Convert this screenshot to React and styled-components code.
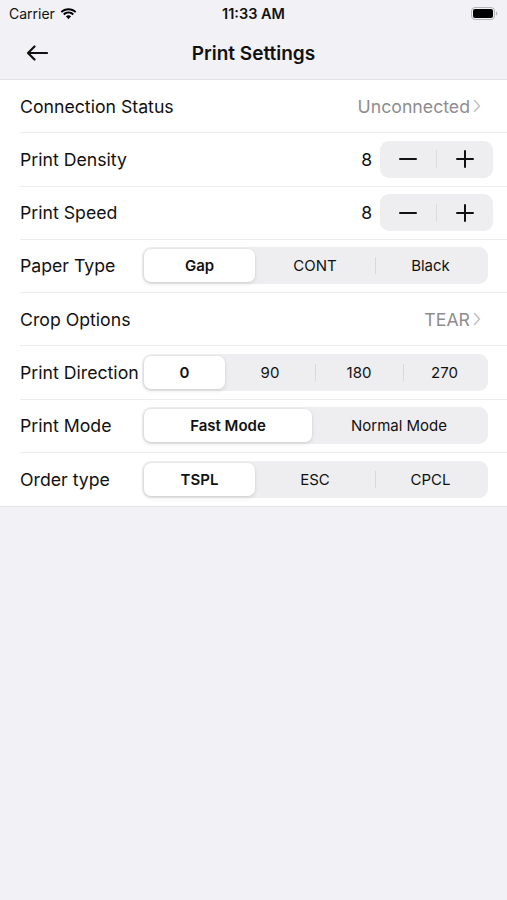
import React from "react";
import styled, { createGlobalStyle } from "styled-components";

const GlobalStyle = createGlobalStyle`
  body {
    margin: 0;
    background: #f1f1f6;
    font-family: Inter, "Liberation Sans", sans-serif;
    color: #111;
  }
`;

const Screen = styled.div`
  width: 507px;
  height: 900px;
  background: #f1f1f6;
`;

const StatusBar = styled.div`
  height: 27px;
  display: grid;
  grid-template-columns: 1fr auto 1fr;
  align-items: center;
  padding: 0 9px;
  font-size: 14px;
  .left {
    display: flex;
    align-items: center;
    gap: 5px;
  }
  .time {
    font-weight: 600;
    font-size: 14.5px;
  }
  .right {
    display: flex;
    justify-content: flex-end;
  }
`;

const NavBar = styled.div`
  height: 52px;
  display: grid;
  grid-template-columns: 60px 1fr 60px;
  align-items: center;
  border-bottom: 1px solid #e2e2e6;
  h1 {
    margin: 0;
    text-align: center;
    font-size: 19px;
    font-weight: 600;
  }
  button {
    border: none;
    background: none;
    padding: 0 0 0 26px;
    display: flex;
    align-items: center;
  }
`;

const List = styled.div`
  background: #fff;
  border-bottom: 1px solid #e4e4e8;
`;

const Row = styled.div`
  height: 53.25px;
  box-sizing: border-box;
  margin-left: 20px;
  padding-right: 19px;
  display: flex;
  align-items: center;
  justify-content: space-between;
  border-bottom: ${(p) => (p.$last ? "none" : "1px solid #ececef")};
`;

const Label = styled.span`
  font-size: 17.7px;
`;

const Detail = styled.span`
  display: flex;
  align-items: center;
  gap: 3px;
  color: #8d8d91;
  font-size: 17.7px;
  margin-right: 7px;
`;

const StepWrap = styled.div`
  display: flex;
  align-items: center;
  gap: 8px;
  margin-right: -5px;
  span {
    font-size: 17.5px;
  }
`;

const Stepper = styled.div`
  width: 113px;
  height: 37px;
  border-radius: 9px;
  background: #eeeef0;
  display: grid;
  grid-template-columns: 1fr 1px 1fr;
  align-items: center;
  justify-items: center;
  i {
    width: 1px;
    height: 18px;
    background: #dcdcdf;
  }
`;

const Segmented = styled.div`
  width: 346px;
  height: 37px;
  box-sizing: border-box;
  padding: 2px;
  border-radius: 9px;
  background: #eeeef0;
  display: grid;
  grid-template-columns: ${(p) => p.$cols};
  align-items: center;
`;

const Segment = styled.div`
  height: 33px;
  display: flex;
  align-items: center;
  justify-content: center;
  font-size: 15px;
  font-weight: ${(p) => (p.$active ? 600 : 400)};
  border-radius: 7px;
  position: relative;
  background: ${(p) => (p.$active ? "#fff" : "transparent")};
  box-shadow: ${(p) =>
    p.$active ? "0 2px 4px rgba(0,0,0,0.1), 0 0 0 0.5px rgba(0,0,0,0.04)" : "none"};
  &::before {
    content: "";
    display: ${(p) => (p.$divider ? "block" : "none")};
    position: absolute;
    left: 0;
    top: 8px;
    width: 1px;
    height: 17px;
    background: #d9d9dc;
  }
`;

const Chevron = () => (
  <svg width="8" height="14" viewBox="0 0 8 14">
    <path d="M1.5 1.5 L6.5 7 L1.5 12.5" fill="none" stroke="#c3c3c7" strokeWidth="1.6" strokeLinecap="round" strokeLinejoin="round" />
  </svg>
);

const Wifi = () => (
  <svg width="17" height="12" viewBox="0 0 17 12">
    <path d="M8.5 2.2c2.5 0 4.8 1 6.5 2.6l1.3-1.4C14.2 1.4 11.5 0.2 8.5 0.2S2.8 1.4.7 3.4L2 4.8c1.7-1.6 4-2.6 6.5-2.6z" />
    <path d="M8.5 5.6c1.6 0 3 .6 4.1 1.6l1.3-1.4C12.5 4.4 10.6 3.6 8.5 3.6S4.5 4.4 3.1 5.8l1.3 1.4c1.1-1 2.5-1.6 4.1-1.6z" />
    <path d="M8.5 7.2c-1 0-1.9.4-2.6 1l2.6 3 2.6-3c-.7-.6-1.6-1-2.6-1z" />
  </svg>
);

const Battery = () => (
  <svg width="27" height="13" viewBox="0 0 27 13">
    <rect x="0.5" y="0.5" width="23" height="12" rx="3.5" fill="none" stroke="#b5b5b8" />
    <rect x="2" y="2" width="20" height="9" rx="2" fill="#000" />
    <path d="M25 4.5v4c.8-.3 1.3-1.1 1.3-2s-.5-1.7-1.3-2z" fill="#b5b5b8" />
  </svg>
);

const BackArrow = () => (
  <svg width="22" height="16" viewBox="0 0 22 16">
    <path d="M21 8H2 M8.5 1.5 L2 8 L8.5 14.5" fill="none" stroke="#111" strokeWidth="2.2" strokeLinecap="round" strokeLinejoin="round" />
  </svg>
);

const Minus = () => (
  <svg width="18" height="18" viewBox="0 0 18 18">
    <path d="M1 9h16" stroke="#111" strokeWidth="2" strokeLinecap="round" />
  </svg>
);

const Plus = () => (
  <svg width="18" height="18" viewBox="0 0 18 18">
    <path d="M1 9h16 M9 1v16" stroke="#111" strokeWidth="2" strokeLinecap="round" />
  </svg>
);

function Seg({ items, cols, active = 0 }) {
  return (
    <Segmented $cols={cols}>
      {items.map((t, i) => (
        <Segment
          key={t}
          $active={i === active}
          $divider={i > 0 && i !== active && i - 1 !== active}
        >
          {t}
        </Segment>
      ))}
    </Segmented>
  );
}

function Step({ value }) {
  return (
    <StepWrap>
      <span>{value}</span>
      <Stepper>
        <Minus />
        <i />
        <Plus />
      </Stepper>
    </StepWrap>
  );
}

export default function App() {
  return (
    <Screen>
      <GlobalStyle />
      <StatusBar>
        <div className="left">
          Carrier <Wifi />
        </div>
        <div className="time">11:33 AM</div>
        <div className="right">
          <Battery />
        </div>
      </StatusBar>
      <NavBar>
        <button>
          <BackArrow />
        </button>
        <h1>Print Settings</h1>
        <div />
      </NavBar>
      <List>
        <Row>
          <Label>Connection Status</Label>
          <Detail>
            Unconnected <Chevron />
          </Detail>
        </Row>
        <Row>
          <Label>Print Density</Label>
          <Step value="8" />
        </Row>
        <Row>
          <Label>Print Speed</Label>
          <Step value="8" />
        </Row>
        <Row>
          <Label>Paper Type</Label>
          <Seg items={["Gap", "CONT", "Black"]} cols="111px 120px 1fr" />
        </Row>
        <Row>
          <Label>Crop Options</Label>
          <Detail>
            TEAR <Chevron />
          </Detail>
        </Row>
        <Row>
          <Label>Print Direction</Label>
          <Seg items={["0", "90", "180", "270"]} cols="81px 90px 88px 1fr" />
        </Row>
        <Row>
          <Label>Print Mode</Label>
          <Seg items={["Fast Mode", "Normal Mode"]} cols="168px 1fr" />
        </Row>
        <Row $last>
          <Label>Order type</Label>
          <Seg items={["TSPL", "ESC", "CPCL"]} cols="111px 120px 1fr" />
        </Row>
      </List>
    </Screen>
  );
}
